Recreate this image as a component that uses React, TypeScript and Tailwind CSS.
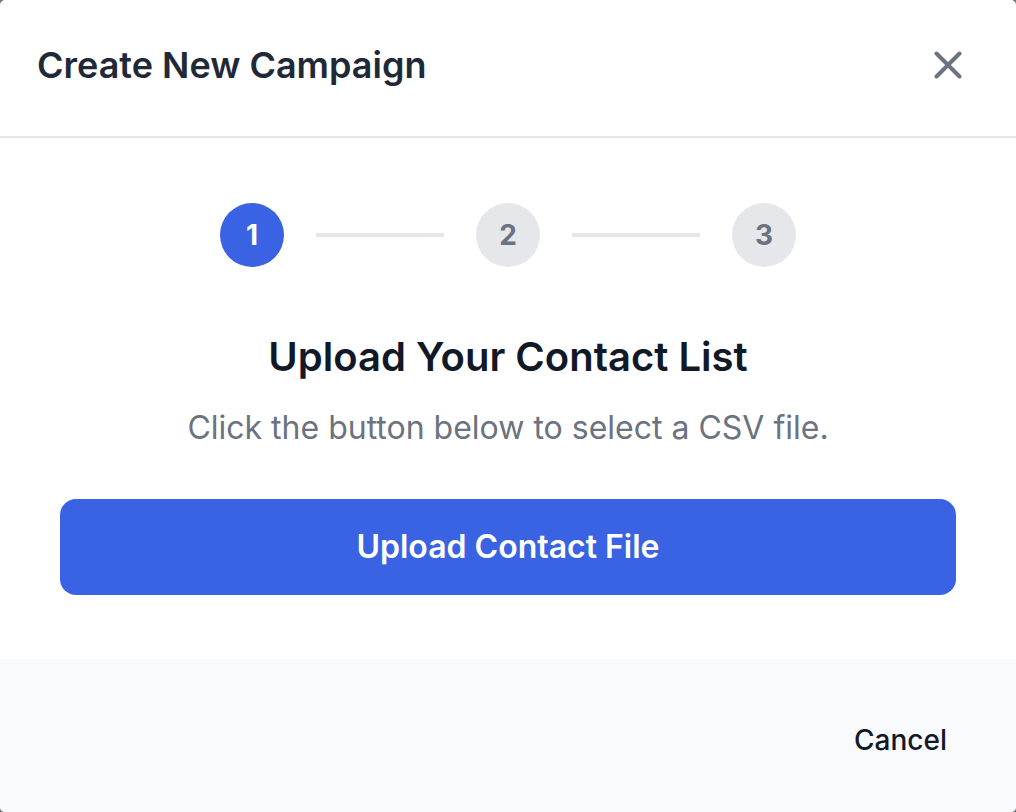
const STEPS = [1, 2, 3];

export default function App() {
  return (
    <div className="min-h-screen w-full bg-[#6b7280]" style={{ fontFamily: "Inter, 'Noto Sans', sans-serif" }}>
      <div className="flex h-[812px] w-full flex-col overflow-hidden rounded-[5px] bg-white">
        {/* Header */}
        <div className="flex h-[138px] shrink-0 items-center justify-between border-b-2 border-[#e5e7eb] pl-[37px] pr-[54px] pb-[6px]">
          <h2 className="text-[36px] font-semibold leading-[44px] text-[#1f2937]">Create New Campaign</h2>
          <button className="text-[#6b7280]" aria-label="Close">
            <svg width="28" height="28" viewBox="0 0 28 28" fill="none" stroke="currentColor" strokeWidth="4" strokeLinecap="round">
              <path d="M2.5 2.5 25.5 25.5M25.5 2.5 2.5 25.5" />
            </svg>
          </button>
        </div>

        {/* Body */}
        <div className="flex flex-col items-center px-[60px] pt-[65px] pb-[64px]">
          <div className="flex items-center gap-[32px]">
            {STEPS.map((n, i) => (
              <div key={n} className="flex items-center gap-[32px]">
                <div
                  className={`flex h-[64px] w-[64px] items-center justify-center rounded-full text-[28px] font-bold ${
                    n === 1 ? "bg-[#3a63e3] text-white" : "bg-[#e5e7eb] text-[#6b7280]"
                  }`}
                >
                  {n}
                </div>
                {i < STEPS.length - 1 && <div className="h-[4px] w-[128px] bg-[#e5e7eb]" />}
              </div>
            ))}
          </div>

          <h3 className="mt-[66px] text-[40px] font-semibold leading-[48px] text-[#111827]">Upload Your Contact List</h3>
          <p className="mt-[23px] text-[32px] leading-[48px] text-[#6b7280]">Click the button below to select a CSV file.</p>

          <button className="mt-[47px] flex h-[96px] w-full items-center justify-center rounded-[16px] bg-[#3a63e3] text-[32px] font-semibold text-white">
            Upload Contact File
          </button>
        </div>

        {/* Footer */}
        <div className="flex flex-1 justify-end bg-[#f9fafb] pr-[69px] pt-[60px]">
          <button className="h-[42px] text-[28px] font-medium leading-[42px] text-[#111827]">Cancel</button>
        </div>
      </div>
    </div>
  );
}
